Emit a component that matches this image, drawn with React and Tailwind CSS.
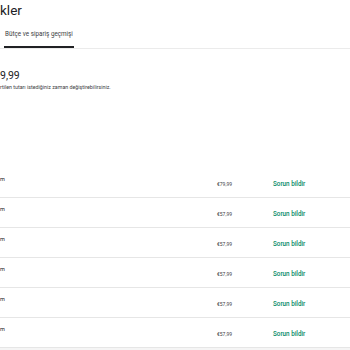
export default function App() {
  const rows = ["€79,99", "€57,99", "€57,99", "€57,99", "€57,99", "€57,99"];
  return (
    <div className="w-[350px] h-[350px] overflow-hidden bg-white text-[#202124]" style={{ fontFamily: "Roboto, 'Open Sans', sans-serif" }}>
      <div className="h-[22px] flex">
        <div className="whitespace-nowrap text-[13.5px] leading-[20px] font-normal">kler</div>
      </div>
      <div className="h-[27px] border-b border-[#ebebeb] flex items-end">
        <div className="ml-[4px] w-[70px] h-full flex flex-col justify-between">
          <div className="text-[6.3px] leading-[8px] pt-[8px] text-[#3c4043] whitespace-nowrap text-center">Bütçe ve sipariş geçmişi</div>
          <div className="h-[2px] bg-[#202124]" />
        </div>
      </div>
      <div className="h-[20px]" />
      <div className="flex h-[14px]">
        <div className="whitespace-nowrap text-[10.5px] leading-[14px]">9,99</div>
      </div>
      <div className="flex h-[8px]">
        <div className="whitespace-nowrap text-[5.3px] leading-[8px] text-[#3c4043]">
          rtilen tutarı istediğiniz zaman değiştirebilirsiniz.
        </div>
      </div>
      <div className="h-[77px]" />
      {rows.map((p, i) => (
        <div key={i} className="h-[30px] border-b border-[#e6e6e6] flex">
          <div className="w-[217px] whitespace-nowrap text-[5.5px] leading-[8px] pt-[7px] text-[#202124]">m</div>
          <div className="w-[56px] text-[5px] leading-[8px] pt-[12px] text-[#3c4043] whitespace-nowrap">{p}</div>
          <div className="text-[6.3px] leading-[8px] pt-[12px] text-[#01875f] font-medium whitespace-nowrap">Sorun bildir</div>
        </div>
      ))}
      <div className="h-[10px] bg-[#f5f5f5]" />
    </div>
  );
}
